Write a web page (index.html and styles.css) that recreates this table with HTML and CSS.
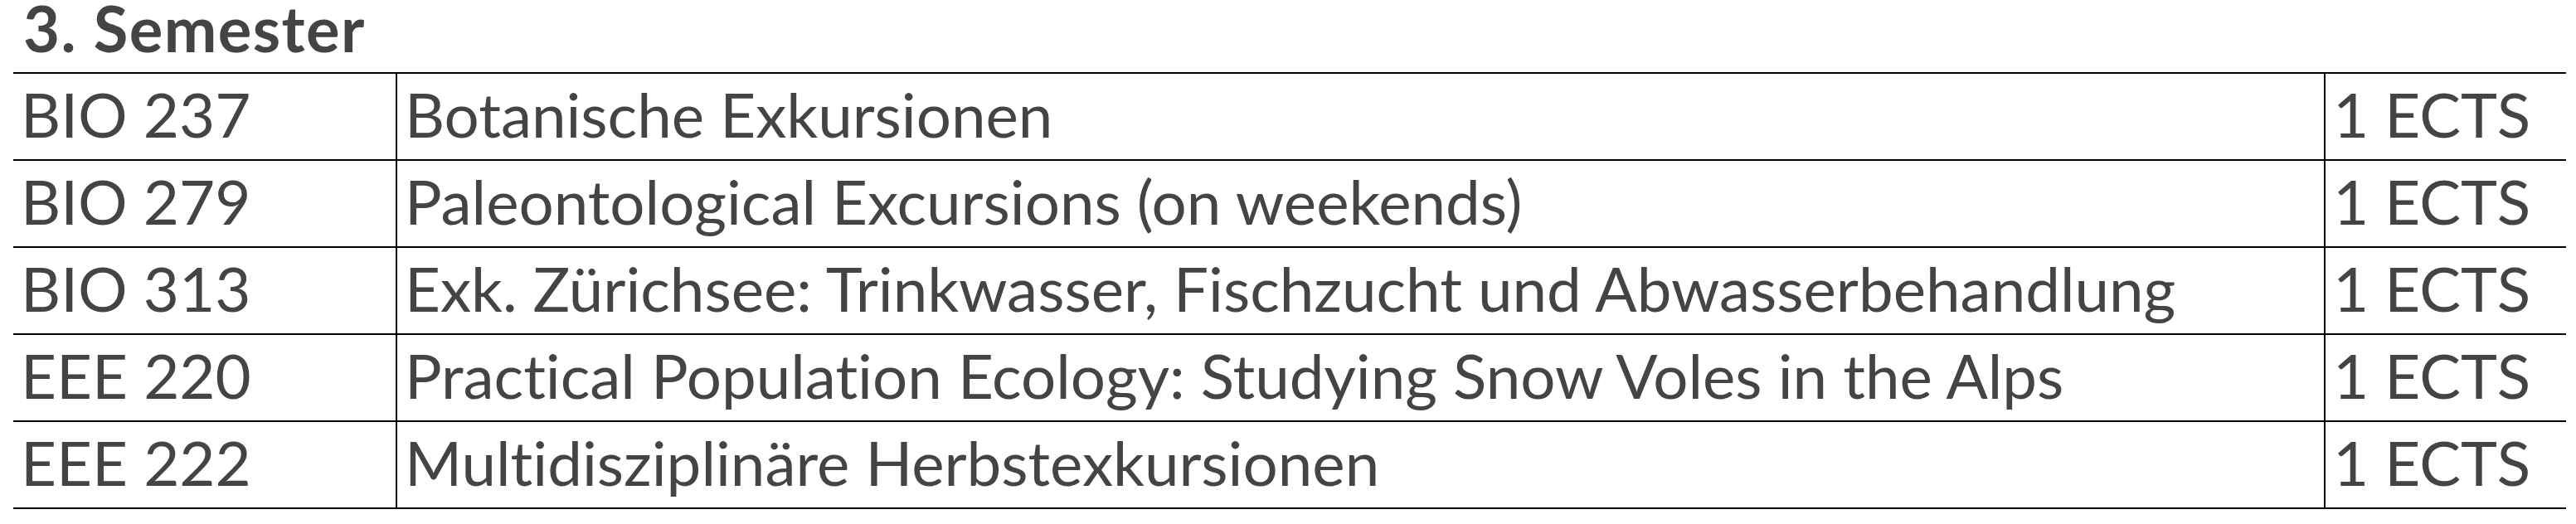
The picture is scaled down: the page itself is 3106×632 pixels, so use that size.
FILE: index.html
```html
<!DOCTYPE html>
<html lang="de">
<head>
<meta charset="utf-8">
<title>3. Semester</title>
<link rel="stylesheet" href="styles.css">
</head>
<body>
<section class="semester">
  <h2 class="semester-title">3. Semester</h2>
  <table class="course-table">
    <colgroup>
      <col class="col-code">
      <col class="col-name">
      <col class="col-ects">
    </colgroup>
    <tbody>
      <tr><td>BIO 237</td><td>Botanische Exkursionen</td><td>1 ECTS</td></tr>
      <tr><td>BIO 279</td><td>Paleontological Excursions (on weekends)</td><td>1 ECTS</td></tr>
      <tr><td>BIO 313</td><td>Exk. Zürichsee: Trinkwasser, Fischzucht und Abwasserbehandlung</td><td>1 ECTS</td></tr>
      <tr><td>EEE 220</td><td>Practical Population Ecology: Studying Snow Voles in the Alps</td><td>1 ECTS</td></tr>
      <tr><td>EEE 222</td><td>Multidisziplinäre Herbstexkursionen</td><td>1 ECTS</td></tr>
    </tbody>
  </table>
</section>
</body>
</html>
```
FILE: styles.css
```css
html, body {
  margin: 0;
  padding: 0;
  background: #ffffff;
}

body {
  font-family: "Lato", "Noto Sans", sans-serif;
  color: #444444;
  font-variant-ligatures: none;
  font-feature-settings: "liga" 0, "clig" 0;
}

.semester {
  padding-left: 16px;
}

.semester-title {
  margin: 0 0 19px 12px;
  padding-top: 0;
  font-size: 76px;
  font-weight: 700;
  line-height: 68px;
  height: 68px;
  letter-spacing: 1.4px;
  color: #444444;
}

.course-table {
  border-collapse: collapse;
  table-layout: fixed;
  width: 3078px;
  font-size: 74.5px;
}

.col-code { width: 462px; }
.col-name { width: 2325px; }
.col-ects { width: 291px; }

.course-table td {
  border: 2px solid #000000;
  height: 98px;
  padding: 0 9px 5px 9px;
  vertical-align: middle;
  line-height: 1.2;
  white-space: nowrap;
}

.course-table tr td:first-child,
.course-table tr td:last-child {
  border-left-width: 0;
  border-right-width: 0;
}

.course-table tr td:nth-child(2) {
  border-left: 2px solid #000000;
  border-right: 2px solid #000000;
}
```
